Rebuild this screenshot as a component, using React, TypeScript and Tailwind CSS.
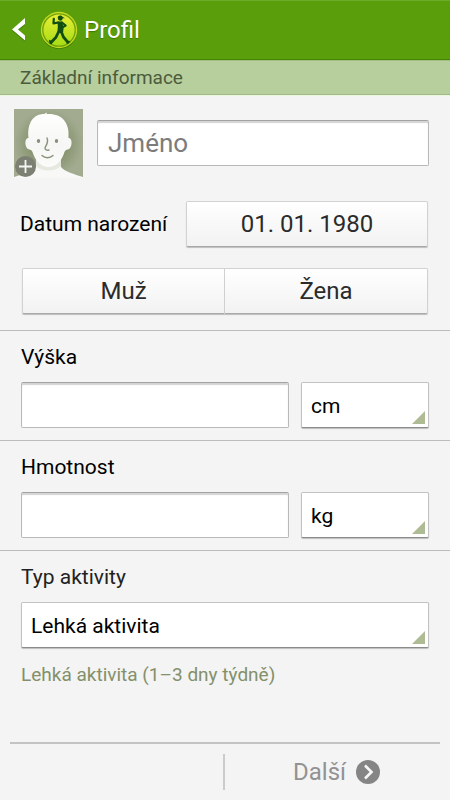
import { useState } from "react";
import type { ReactNode } from "react";

const fieldClass =
  "block h-[46px] w-full min-w-0 rounded-[2px] border border-[#b9b9b9] border-t-[#a3a3a3] bg-white px-[10px] text-[26px] text-[#222] shadow-[inset_0_2px_1px_#d4d4d4] outline-none placeholder:text-[#7c7c7c]";

const buttonClass =
  "h-[46px] border border-[#d2d2d2] border-b-[#a8a8a8] bg-linear-to-b from-white to-[#f2f2f2] text-[24px] text-[#2b2b2b] shadow-[0_1px_1px_#bdbdbd]";

function RunnerLogo() {
  return (
    <svg viewBox="0 0 38 38" className="size-[38px] shrink-0" aria-hidden="true">
      <defs>
        <linearGradient id="disc" x1="0" y1="0" x2="0" y2="1">
          <stop offset="0" stopColor="#e9ee35" />
          <stop offset="1" stopColor="#a6dc14" />
        </linearGradient>
      </defs>
      <circle cx="19" cy="19.8" r="18.2" fill="#397900" />
      <circle cx="19" cy="19" r="18.2" fill="#c3db20" />
      <circle cx="19" cy="19" r="16.2" fill="url(#disc)" stroke="#6f9f0d" strokeWidth="1.3" />
      <path d="M18 5.5c1-1.5 3.8-1.4 4.5.2l2.5 1.5-2.3.1c-.1 1.5-1 2.2-2 2.4-2 .2-3.5-2-2.7-4.2z" fill="#124d12" />
      <path d="M17.5 10.5h4.8l1.3 6.5-.6 5h-5.6l.4-6z" fill="#124d12" />
      <g fill="none" stroke="#124d12" strokeLinecap="round" strokeLinejoin="round">
        <path d="M18.5 11.5l-5 .8.3-4.4" strokeWidth="2.2" />
        <path d="M22 11.5l3.7 3-4.2 2.3" strokeWidth="2" />
        <path d="M18.8 20.5l-2.8 5.7-5.2 5.5M21.2 20.5l2.2 5.5 4.4 5.2" strokeWidth="2.8" />
        <path d="M9.8 29.8l1.4 2.3M27.2 31.8l2-1.2" strokeWidth="1.8" />
      </g>
    </svg>
  );
}

function Avatar() {
  return (
    <svg viewBox="0 0 69 69" className="block size-[69px]" aria-hidden="true">
      <defs>
        <linearGradient id="face" x1="0" y1="0" x2="0" y2="1">
          <stop offset="0" stopColor="#ffffff" />
          <stop offset="0.6" stopColor="#f6f7f4" />
          <stop offset="1" stopColor="#fbfbf9" />
        </linearGradient>
        <radialGradient id="backdrop">
          <stop offset="0.5" stopColor="#87936f" />
          <stop offset="1" stopColor="#a2ab90" />
        </radialGradient>
      </defs>
      <path d="M0 0h69v69H0z" fill="url(#backdrop)" />
      <path d="M0 69v-1c9-3 18-5 22-10V46h25v12c4 5 13 7 22 10v1z" fill="#f8f9f6" />
      <path d="M22 48h25v9c-6 6-19 6-25 0z" fill="#e6e9e0" />
      <path
        d="M14.5 29C13 13 20 5 30 5l3-1.5-.5 1.7C47 4 56 13 54.500 29c4.500-.5 4 11-1 11.500-2 .3-3 2-3.500 4C47 53 41 58 34.500 58S22 53 19 44.500c-.5-2-1.500-3.700-3.500-4-5-.5-5.500-12-1-11.500z"
        fill="url(#face)"
      />
      <ellipse cx="24.5" cy="32" rx="1.7" ry="2" fill="#87917b" />
      <ellipse cx="42.5" cy="32" rx="1.7" ry="2" fill="#87917b" />
      <path
        d="M33 29c2 4-1 7-2 10 0 2 2 2.500 4 2M28 46.500c3 3 8 3 11 0"
        fill="none"
        stroke="#87917b"
        strokeWidth="1.4"
        strokeLinecap="round"
      />
      <circle cx="11.5" cy="57.5" r="10.5" fill="#7b8073" />
      <path d="M11.5 51v13M5 57.5h13" stroke="#f5f5f5" strokeWidth="1.8" />
    </svg>
  );
}

interface SpinnerProps {
  id: string;
  label: string;
  options: string[];
}

function Spinner({ id, label, options }: SpinnerProps) {
  return (
    <div className="relative">
      <select
        id={id}
        aria-label={label}
        className="block h-[46px] w-full appearance-none rounded-[2px] border border-[#c2c2c2] border-b-[#8b8b8b] bg-white px-[9px] pt-[3px] text-[21px] text-black shadow-[0_1px_1px_#bdbdbd] outline-none"
      >
        {options.map((option) => (
          <option key={option}>{option}</option>
        ))}
      </select>
      <svg
        viewBox="0 0 13 13"
        className="pointer-events-none absolute right-1 bottom-1 size-[13px]"
        aria-hidden="true"
      >
        <path d="M13 0v13H0z" fill="#aebb94" />
      </svg>
    </div>
  );
}

function Section({ children }: { children: ReactNode }) {
  return <section className="border-t border-[#bcbcbc] px-[21px] pt-3 pb-3">{children}</section>;
}

interface MeasureProps {
  id: string;
  label: string;
  units: string[];
}

function Measure({ id, label, units }: MeasureProps) {
  return (
    <Section>
      <label htmlFor={id} className="block text-[21px] leading-7 text-black">
        {label}
      </label>
      <div className="mt-[11px] grid grid-cols-[1fr_128px] gap-3">
        <input id={id} inputMode="decimal" className={fieldClass} />
        <Spinner id={`${id}-unit`} label={`${label} – jednotka`} options={units} />
      </div>
    </Section>
  );
}

export default function App() {
  const [gender, setGender] = useState("");

  return (
    <div className="flex min-h-screen flex-col bg-[#f4f4f4] font-[Roboto,sans-serif]">
      <header className="flex h-[60px] items-center border-t border-b border-t-[#6dac28] border-b-[#458505] bg-[#5a9e0c] pl-3">
        <button type="button" aria-label="Zpět" className="flex h-full w-7 items-center">
          <svg viewBox="0 0 14 24" className="h-6 w-[14px]" aria-hidden="true">
            <path d="M13 1v6L6 12.5l7 6v5L0 12.5z" fill="#397900" />
            <path d="M13 0v6L6 11.5l7 6v5L0 11.5z" fill="#fff" />
          </svg>
        </button>
        <RunnerLogo />
        <h1 className="ml-[6px] text-[24px] text-white [text-shadow:0_1px_1px_#397900]">Profil</h1>
      </header>
      <h2 className="h-[35px] border-t border-b border-t-[#a1bd81] border-b-[#a2b78b] bg-[#b7ce9d] px-5 text-[19px] leading-[34px] text-[#4c5c3c]">
        Základní informace
      </h2>

      <main className="border-t border-[#e8f8dc]">
        <div className="flex gap-[14px] pt-[13px] pr-[21px] pl-[14px]">
          <button type="button" aria-label="Přidat fotografii">
            <Avatar />
          </button>
          <div className="flex-1 pt-[11px]">
            <input aria-label="Jméno" placeholder="Jméno" className={fieldClass} />
          </div>
        </div>
        <div className="mt-[23px] flex items-center pr-[22px] pl-5">
          <label htmlFor="birth" className="w-[166px] pt-[2px] text-[21px] text-black">
            Datum narození
          </label>
          <button id="birth" type="button" className={`flex-1 rounded-[2px] ${buttonClass}`}>
            01. 01. 1980
          </button>
        </div>
        <div role="group" aria-label="Pohlaví" className="mt-[21px] mb-4 grid grid-cols-2 px-[22px]">
          <button
            type="button"
            aria-pressed={gender === "m"}
            onClick={() => setGender("m")}
            className={`rounded-l-[2px] ${buttonClass}`}
          >
            Muž
          </button>
          <button
            type="button"
            aria-pressed={gender === "f"}
            onClick={() => setGender("f")}
            className={`rounded-r-[2px] border-l-0 ${buttonClass}`}
          >
            Žena
          </button>
        </div>

        <Measure id="height" label="Výška" units={["cm", "ft"]} />
        <Measure id="weight" label="Hmotnost" units={["kg", "lb"]} />
        <Section>
          <label htmlFor="activity" className="mb-[11px] block text-[21px] leading-7 text-[#222]">
            Typ aktivity
          </label>
          <Spinner id="activity" label="Typ aktivity" options={["Lehká aktivita", "Střední aktivita", "Těžká aktivita"]} />
          <p className="mt-[13px] text-[19px] leading-7 text-[#83906a]">Lehká aktivita (1–3 dny týdně)</p>
        </Section>
      </main>

      <footer className="mx-[10px] mt-auto grid h-[58px] grid-cols-2 border-t-2 border-[#c3c3c3]">
        <div className="my-[10px] border-r-2 border-[#cbcbcb]" />
        <button type="button" className="flex items-center justify-center gap-[10px] pl-2 text-[24px] text-[#929292]">
          Další
          <svg viewBox="0 0 24 24" className="size-6" aria-hidden="true">
            <circle cx="12" cy="12" r="12" fill="#858585" />
            <path d="M9 5.5l6.5 6.5L9 18.5" fill="none" stroke="#f7f7f7" strokeWidth="2.6" />
          </svg>
        </button>
      </footer>
    </div>
  );
}
